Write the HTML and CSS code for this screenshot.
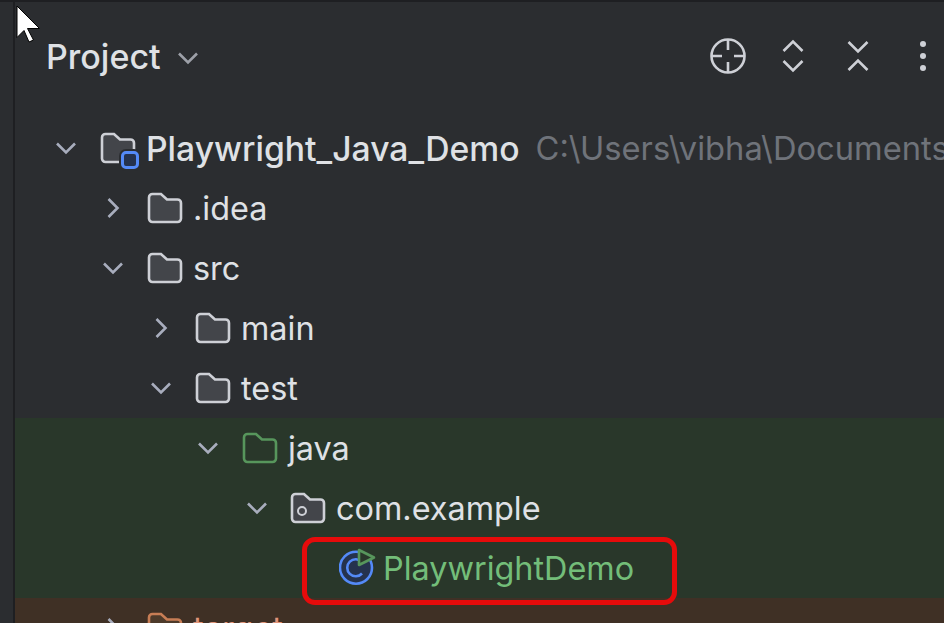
FILE: index.html
```html
<!DOCTYPE html>
<html lang="en">
<head>
    <meta charset="UTF-8">
    <meta name="viewport" content="width=device-width, initial-scale=1.0">
    <title>Project</title>
    <link rel="stylesheet" href="styles.css">
</head>
<body>
    <svg class="icon-defs" width="0" height="0">
        <symbol id="folder" viewBox="0 0 36 32">
            <path d="M2 5.500a3.500 3.500 0 0 1 3.500-3.500h8.500l6 5.500h10.500a3.500 3.500 0 0 1 3.500 3.500v15.500a3.500 3.500 0 0 1-3.500 3.500h-25a3.500 3.500 0 0 1-3.500-3.500z"/>
        </symbol>
        <symbol id="down" viewBox="0 0 22 14"><path d="M2 2.500l9 9 9-9"/></symbol>
        <symbol id="right" viewBox="0 0 14 22"><path d="M2.500 2l9 9-9 9"/></symbol>
    </svg>

    <div class="strip"></div>
    <div class="panel">
        <header class="toolbar">
            <div class="title">Project
                <svg class="chev title-chev"><use href="#down"/></svg>
            </div>
            <div class="actions">
                <svg class="action" viewBox="0 0 36 36">
                    <circle cx="18" cy="18" r="16.500"/>
                    <path d="M18 2v10M18 24v10M2 18h10M24 18h10"/>
                </svg>
                <svg class="action" viewBox="0 0 36 36">
                    <path d="M8.500 13L18 3.500 27.500 13M8.500 23L18 32.500 27.500 23"/>
                </svg>
                <svg class="action" viewBox="0 0 36 36">
                    <path d="M8.500 4L18 13.500 27.500 4M8.500 32L18 22.500 27.500 32"/>
                </svg>
                <div class="dots"><i></i><i></i><i></i></div>
            </div>
        </header>

        <div class="tree">
            <div class="row">
                <svg class="chev"><use href="#down"/></svg>
                <span class="folder-wrap">
                    <svg class="folder"><use href="#folder"/></svg>
                    <span class="module-badge"></span>
                </span>
                <span class="name root-name">Playwright_Java_Demo</span>
                <span class="path">C:\Users\vibha\Documents</span>
            </div>
            <div class="row depth-1">
                <svg class="chev-r"><use href="#right"/></svg>
                <svg class="folder"><use href="#folder"/></svg>
                <span class="name">.idea</span>
            </div>
            <div class="row depth-1">
                <svg class="chev"><use href="#down"/></svg>
                <svg class="folder"><use href="#folder"/></svg>
                <span class="name">src</span>
            </div>
            <div class="row depth-2">
                <svg class="chev-r"><use href="#right"/></svg>
                <svg class="folder"><use href="#folder"/></svg>
                <span class="name">main</span>
            </div>
            <div class="row depth-2">
                <svg class="chev"><use href="#down"/></svg>
                <svg class="folder"><use href="#folder"/></svg>
                <span class="name">test</span>
            </div>
            <div class="row depth-3 tested">
                <svg class="chev"><use href="#down"/></svg>
                <svg class="folder green"><use href="#folder"/></svg>
                <span class="name">java</span>
            </div>
            <div class="row depth-4 tested">
                <svg class="chev"><use href="#down"/></svg>
                <span class="folder-wrap pkg-wrap">
                    <svg class="folder"><use href="#folder"/></svg>
                    <span class="pkg-dot"></span>
                </span>
                <span class="name">com.example</span>
            </div>
            <div class="row file tested">
                <svg class="class-icon" viewBox="0 0 38 38">
                    <circle class="c-disc" cx="17" cy="20.700" r="16"/>
                    <path class="c-letter" d="M23 26.500a8.500 8.500 0 1 1 0-11.500"/>
                    <path class="c-run" d="M20 3v15l15-7.500z"/>
                </svg>
                <span class="name green-text">PlaywrightDemo</span>
            </div>
            <div class="row depth-1 excluded">
                <svg class="chev-r"><use href="#right"/></svg>
                <svg class="folder orange"><use href="#folder"/></svg>
                <span class="name orange-text">target</span>
            </div>
        </div>
    </div>

    <div class="callout"></div>
    <svg class="cursor" viewBox="0 0 26 38">
        <path d="M1 1L23.500 23.500H11.500L17.500 35 13 37 8 25.500 1 32.500z"/>
    </svg>
</body>
</html>
```

FILE: styles.css
```css
* {
    box-sizing: border-box;
}
html, body {
    height: 100%;
}
body {
    margin: 0;
    display: flex;
    overflow: hidden;
    background: #2b2d30;
    font-family: Inter, "Noto Sans", sans-serif;
    color: #dfe1e5;
}
.icon-defs {
    position: absolute;
}
.strip {
    width: 15px;
    flex: none;
    background: #2b2d30;
    border-top: 2px solid #1e1f22;
    border-right: 2px solid #1e1f22;
}
.panel {
    flex: 1;
    min-width: 0;
    border-top: 2px solid #1e1f22;
}
.toolbar {
    display: flex;
    align-items: center;
    justify-content: space-between;
    height: 116px;
    padding: 0 3px 8px 31px;
}
.title {
    display: flex;
    align-items: center;
    gap: 16px;
    font-size: 34px;
    font-weight: 500;
}
.title-chev {
    margin-top: 3px;
}
.actions {
    display: flex;
    align-items: center;
    gap: 29px;
}
.action {
    width: 36px;
    height: 36px;
    fill: none;
    stroke: #ced0d6;
    stroke-width: 2.600;
}
.dots {
    display: flex;
    flex-direction: column;
    align-items: center;
    gap: 6.300px;
    width: 36px;
}
.dots i {
    width: 6px;
    height: 6px;
    border-radius: 50%;
    background: #ced0d6;
}
.tree {
    display: flex;
    flex-direction: column;
}
.row {
    display: flex;
    align-items: center;
    flex: none;
    height: 60px;
    padding-left: 40px;
    white-space: nowrap;
    font-size: 32.400px;
}
.depth-1 { padding-left: 87px; }
.depth-2 { padding-left: 135px; }
.depth-3 { padding-left: 182px; }
.depth-4 { padding-left: 231px; }
.file { padding-left: 324px; }
.tested { background: #29372a; }
.excluded { background: #3f3025; }
.chev, .chev-r {
    flex: none;
    fill: none;
    stroke: #a8adbd;
    stroke-width: 2.600;
}
.chev {
    width: 22px;
    height: 14px;
}
.chev-r {
    width: 14px;
    height: 22px;
    margin: 0 4px;
}
.title-chev {
    stroke: #9da0a8;
}
.folder {
    flex: none;
    display: block;
    width: 36px;
    height: 32px;
    fill: #43454a;
    stroke: #ced0d6;
    stroke-width: 2.600;
}
.folder.green {
    fill: none;
    stroke: #57965c;
}
.folder.orange {
    fill: #4d3a2a;
    stroke: #c77d55;
}
.row > .folder, .folder-wrap {
    margin-left: 23px;
}
.row > .pkg-wrap {
    margin-left: 22px;
}
.row > .name {
    margin-left: 10px;
}
.root-name {
    font-size: 33.700px;
    font-weight: 500;
}
.folder-wrap {
    position: relative;
    flex: none;
}
.module-badge {
    position: absolute;
    right: -3px;
    bottom: -5px;
    width: 18px;
    height: 18px;
    border: 3px solid #548af7;
    border-radius: 5px;
    background: #25324d;
    box-shadow: 0 0 0 2px #2b2d30;
}
.pkg-dot {
    position: absolute;
    left: 7px;
    top: 14px;
    width: 10px;
    height: 10px;
    border: 2.500px solid #ced0d6;
    border-radius: 50%;
}
.path {
    margin-left: 16px;
    font-size: 32.700px;
    color: #6f737a;
}
.green-text { color: #73bd79; }
.orange-text { color: #e0957b; }
.class-icon {
    flex: none;
    width: 38px;
    height: 38px;
    margin-top: -4px;
    fill: none;
}
.c-disc {
    fill: #25324d;
    stroke: #548af7;
    stroke-width: 2.600;
}
.c-letter {
    stroke: #548af7;
    stroke-width: 2.600;
}
.c-run {
    fill: #29372a;
    stroke: #57965c;
    stroke-width: 2.600;
    stroke-linejoin: round;
}
.row.file > .name {
    margin-left: 6px;
}
.callout {
    position: absolute;
    left: 302px;
    top: 537px;
    width: 375px;
    height: 68px;
    border: 5px solid #e60b0b;
    border-radius: 13px;
}
.cursor {
    position: absolute;
    left: 16px;
    top: 5px;
    width: 26px;
    height: 38px;
    fill: #fff;
    stroke: #000;
    stroke-width: 1;
}
```
